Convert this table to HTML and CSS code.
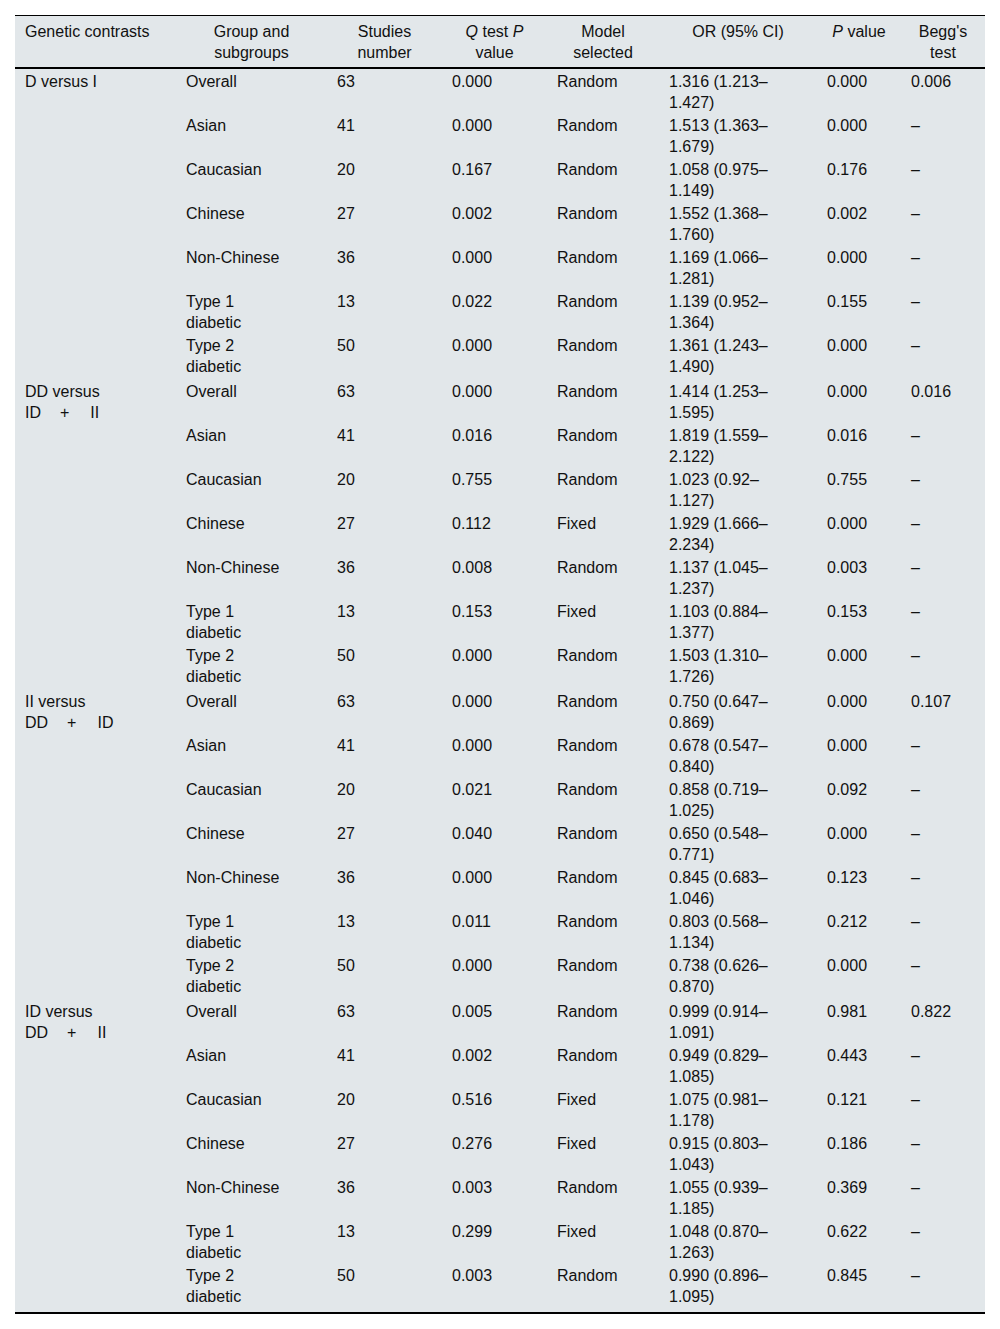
FILE: index.html
```html
<!DOCTYPE html>
<html>
<head>
<meta charset="utf-8">
<link rel="stylesheet" href="styles.css">
</head>
<body>
<div class="page">
<table class="tbl">
<colgroup>
<col class="c1"><col class="c2"><col class="c3"><col class="c4"><col class="c5"><col class="c6"><col class="c7"><col class="c8">
</colgroup>
<thead>
<tr>
<th class="left">Genetic contrasts</th>
<th>Group and<br>subgroups</th>
<th>Studies<br>number</th>
<th><i>Q</i> test <i>P</i><br>value</th>
<th>Model<br>selected</th>
<th>OR (95% CI)</th>
<th><i>P</i> value</th>
<th>Begg's<br>test</th>
</tr>
</thead>
<tbody>
<tr><td>D versus I</td><td>Overall</td><td>63</td><td>0.000</td><td>Random</td><td>1.316 (1.213–<br>1.427)</td><td>0.000</td><td>0.006</td></tr>
<tr><td></td><td>Asian</td><td>41</td><td>0.000</td><td>Random</td><td>1.513 (1.363–<br>1.679)</td><td>0.000</td><td>–</td></tr>
<tr><td></td><td>Caucasian</td><td>20</td><td>0.167</td><td>Random</td><td>1.058 (0.975–<br>1.149)</td><td>0.176</td><td>–</td></tr>
<tr><td></td><td>Chinese</td><td>27</td><td>0.002</td><td>Random</td><td>1.552 (1.368–<br>1.760)</td><td>0.002</td><td>–</td></tr>
<tr><td></td><td>Non-Chinese</td><td>36</td><td>0.000</td><td>Random</td><td>1.169 (1.066–<br>1.281)</td><td>0.000</td><td>–</td></tr>
<tr><td></td><td>Type 1<br>diabetic</td><td>13</td><td>0.022</td><td>Random</td><td>1.139 (0.952–<br>1.364)</td><td>0.155</td><td>–</td></tr>
<tr><td></td><td>Type 2<br>diabetic</td><td>50</td><td>0.000</td><td>Random</td><td>1.361 (1.243–<br>1.490)</td><td>0.000</td><td>–</td></tr>

<tr class="grp"><td>DD versus<br>ID<span class="op">+</span>II</td><td>Overall</td><td>63</td><td>0.000</td><td>Random</td><td>1.414 (1.253–<br>1.595)</td><td>0.000</td><td>0.016</td></tr>
<tr><td></td><td>Asian</td><td>41</td><td>0.016</td><td>Random</td><td>1.819 (1.559–<br>2.122)</td><td>0.016</td><td>–</td></tr>
<tr><td></td><td>Caucasian</td><td>20</td><td>0.755</td><td>Random</td><td>1.023 (0.92–<br>1.127)</td><td>0.755</td><td>–</td></tr>
<tr><td></td><td>Chinese</td><td>27</td><td>0.112</td><td>Fixed</td><td>1.929 (1.666–<br>2.234)</td><td>0.000</td><td>–</td></tr>
<tr><td></td><td>Non-Chinese</td><td>36</td><td>0.008</td><td>Random</td><td>1.137 (1.045–<br>1.237)</td><td>0.003</td><td>–</td></tr>
<tr><td></td><td>Type 1<br>diabetic</td><td>13</td><td>0.153</td><td>Fixed</td><td>1.103 (0.884–<br>1.377)</td><td>0.153</td><td>–</td></tr>
<tr><td></td><td>Type 2<br>diabetic</td><td>50</td><td>0.000</td><td>Random</td><td>1.503 (1.310–<br>1.726)</td><td>0.000</td><td>–</td></tr>

<tr class="grp"><td>II versus<br>DD<span class="op">+</span>ID</td><td>Overall</td><td>63</td><td>0.000</td><td>Random</td><td>0.750 (0.647–<br>0.869)</td><td>0.000</td><td>0.107</td></tr>
<tr><td></td><td>Asian</td><td>41</td><td>0.000</td><td>Random</td><td>0.678 (0.547–<br>0.840)</td><td>0.000</td><td>–</td></tr>
<tr><td></td><td>Caucasian</td><td>20</td><td>0.021</td><td>Random</td><td>0.858 (0.719–<br>1.025)</td><td>0.092</td><td>–</td></tr>
<tr><td></td><td>Chinese</td><td>27</td><td>0.040</td><td>Random</td><td>0.650 (0.548–<br>0.771)</td><td>0.000</td><td>–</td></tr>
<tr><td></td><td>Non-Chinese</td><td>36</td><td>0.000</td><td>Random</td><td>0.845 (0.683–<br>1.046)</td><td>0.123</td><td>–</td></tr>
<tr><td></td><td>Type 1<br>diabetic</td><td>13</td><td>0.011</td><td>Random</td><td>0.803 (0.568–<br>1.134)</td><td>0.212</td><td>–</td></tr>
<tr><td></td><td>Type 2<br>diabetic</td><td>50</td><td>0.000</td><td>Random</td><td>0.738 (0.626–<br>0.870)</td><td>0.000</td><td>–</td></tr>

<tr class="grp"><td>ID versus<br>DD<span class="op">+</span>II</td><td>Overall</td><td>63</td><td>0.005</td><td>Random</td><td>0.999 (0.914–<br>1.091)</td><td>0.981</td><td>0.822</td></tr>
<tr><td></td><td>Asian</td><td>41</td><td>0.002</td><td>Random</td><td>0.949 (0.829–<br>1.085)</td><td>0.443</td><td>–</td></tr>
<tr><td></td><td>Caucasian</td><td>20</td><td>0.516</td><td>Fixed</td><td>1.075 (0.981–<br>1.178)</td><td>0.121</td><td>–</td></tr>
<tr><td></td><td>Chinese</td><td>27</td><td>0.276</td><td>Fixed</td><td>0.915 (0.803–<br>1.043)</td><td>0.186</td><td>–</td></tr>
<tr><td></td><td>Non-Chinese</td><td>36</td><td>0.003</td><td>Random</td><td>1.055 (0.939–<br>1.185)</td><td>0.369</td><td>–</td></tr>
<tr><td></td><td>Type 1<br>diabetic</td><td>13</td><td>0.299</td><td>Fixed</td><td>1.048 (0.870–<br>1.263)</td><td>0.622</td><td>–</td></tr>
<tr><td></td><td>Type 2<br>diabetic</td><td>50</td><td>0.003</td><td>Random</td><td>0.990 (0.896–<br>1.095)</td><td>0.845</td><td>–</td></tr>
</tbody>
</table>
</div>
</body>
</html>
```

FILE: styles.css
```css
html, body {
  margin: 0;
  padding: 0;
  background: #ffffff;
}
.page {
  padding: 15px;
}
.tbl {
  width: 970px;
  table-layout: fixed;
  border-collapse: collapse;
  background: #e2e7ea;
  font-family: "Liberation Sans", Arial, sans-serif;
  font-size: 16px;
  line-height: 21px;
  color: #111;
  border-top: 1px solid #000;
  border-bottom: 2px solid #000;
}
.c1 { width: 161px; }
.c2 { width: 151px; }
.c3 { width: 115px; }
.c4 { width: 105px; }
.c5 { width: 112px; }
.c6 { width: 158px; }
.c7 { width: 84px; }
.c8 { width: 84px; }
.tbl th {
  font-weight: normal;
  text-align: center;
  vertical-align: top;
  padding: 5px 10px 4px 10px;
  border-bottom: 2px solid #000;
}
.tbl th.left {
  text-align: left;
}
.tbl td {
  text-align: left;
  vertical-align: top;
  padding: 2px 10px 0 10px;
}
.tbl tr.grp td {
  padding-top: 4px;
}
.tbl tbody tr:last-child td {
  padding-bottom: 5px;
}
.op {
  display: inline-block;
  margin: 0 21px 0 19px;
}
```
